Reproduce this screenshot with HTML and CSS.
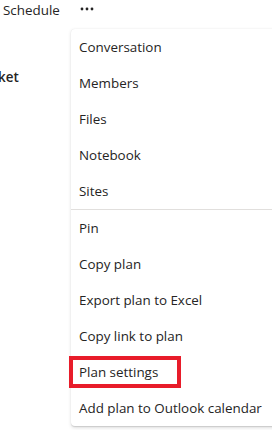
FILE: index.html
```html
<!DOCTYPE html>
<html lang="en">
<head>
    <meta charset="UTF-8">
    <meta name="viewport" content="width=device-width, initial-scale=1.0">
    <title>Plan menu</title>
    <link rel="stylesheet" href="styles.css">
</head>
<body>
    <div class="page">
        <div class="tabs">
            <span class="tab">Schedule</span>
            <svg class="more" width="14" height="4" viewBox="0 0 14 4">
                <circle cx="2" cy="2" r="1.4"/>
                <circle cx="7" cy="2" r="1.4"/>
                <circle cx="12" cy="2" r="1.4"/>
            </svg>
        </div>
        <div class="bucket">ket</div>

        <div class="menu">
            <div class="group">
                <div class="item">Conversation</div>
                <div class="item">Members</div>
                <div class="item">Files</div>
                <div class="item">Notebook</div>
                <div class="item">Sites</div>
            </div>
            <div class="group">
                <div class="item">Pin</div>
                <div class="item">Copy plan</div>
                <div class="item">Export plan to Excel</div>
                <div class="item">Copy link to plan</div>
                <div class="item marked">Plan settings</div>
                <div class="item">Add plan to Outlook calendar</div>
            </div>
        </div>
    </div>
</body>
</html>
```

FILE: styles.css
```css
body {
    margin: 0;
    background: #fff;
    font-family: 'Open Sans', 'Noto Sans', sans-serif;
    color: #252424;
    font-size: 13.4px;
}

.page {
    position: relative;
    width: 272px;
    height: 430px;
    overflow: hidden;
}

.tabs {
    display: flex;
    align-items: center;
    gap: 20px;
    height: 20px;
    padding-left: 3px;
}

.more {
    fill: #252424;
    margin-top: -2px;
}

.bucket {
    margin-top: 48px;
    margin-left: -2px;
    font-weight: 600;
}

.menu {
    position: absolute;
    top: 29px;
    left: 71px;
    width: 220px;
    background: #fff;
    border-radius: 4px;
    box-shadow: 0 1.6px 3.6px rgba(0,0,0,0.13), 0 0.3px 0.9px rgba(0,0,0,0.11);
}

.group + .group {
    border-top: 1px solid #e1dfdd;
}

.item {
    position: relative;
    height: 36px;
    display: flex;
    align-items: center;
    padding-left: 8px;
    white-space: nowrap;
}

.marked::after {
    content: '';
    position: absolute;
    left: -2px;
    top: 2px;
    width: 104px;
    height: 24px;
    border: 4px solid #e81c2a;
}
```
